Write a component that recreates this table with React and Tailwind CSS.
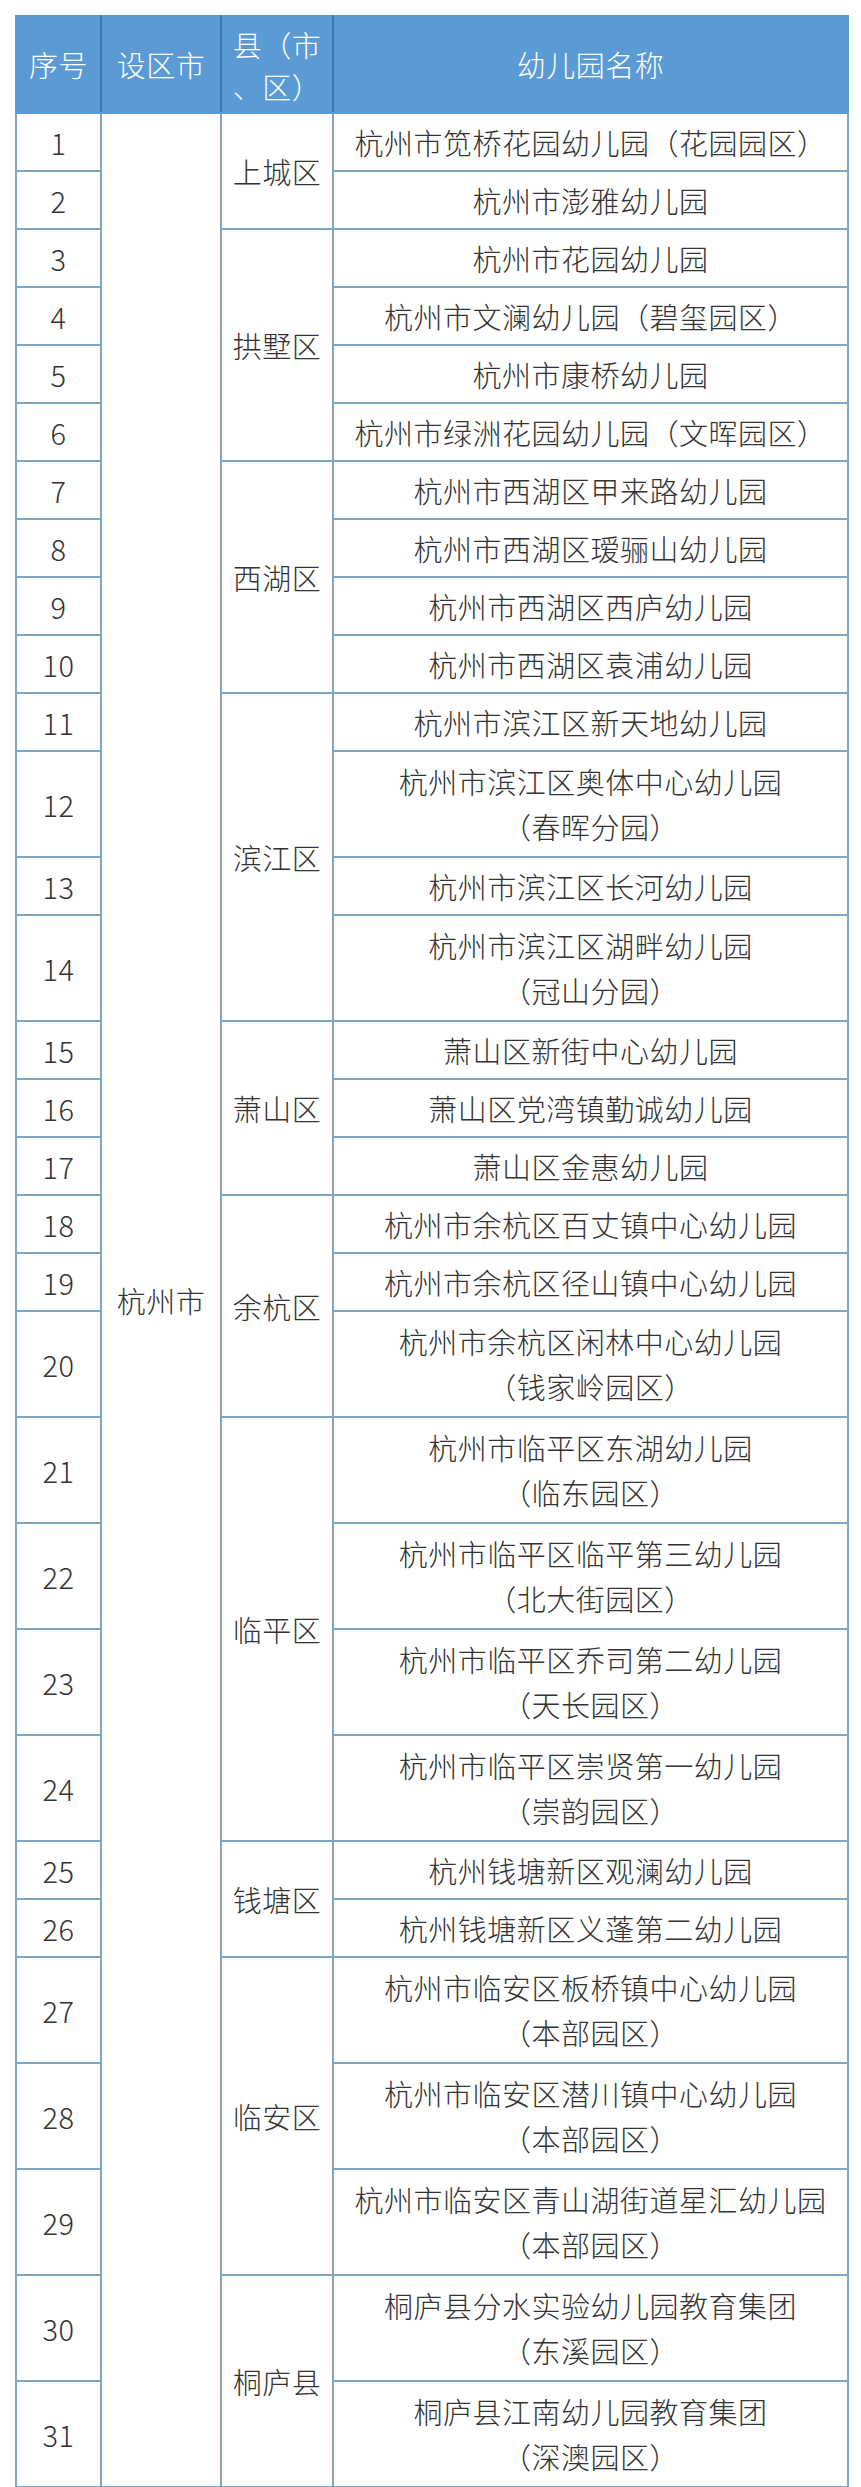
const groups = [
  { district: '上城区', rows: [['杭州市笕桥花园幼儿园（花园园区）'], ['杭州市澎雅幼儿园']] },
  {
    district: '拱墅区',
    rows: [['杭州市花园幼儿园'], ['杭州市文澜幼儿园（碧玺园区）'], ['杭州市康桥幼儿园'], ['杭州市绿洲花园幼儿园（文晖园区）']],
  },
  {
    district: '西湖区',
    rows: [['杭州市西湖区甲来路幼儿园'], ['杭州市西湖区瑷骊山幼儿园'], ['杭州市西湖区西庐幼儿园'], ['杭州市西湖区袁浦幼儿园']],
  },
  {
    district: '滨江区',
    rows: [
      ['杭州市滨江区新天地幼儿园'],
      ['杭州市滨江区奥体中心幼儿园', '（春晖分园）'],
      ['杭州市滨江区长河幼儿园'],
      ['杭州市滨江区湖畔幼儿园', '（冠山分园）'],
    ],
  },
  { district: '萧山区', rows: [['萧山区新街中心幼儿园'], ['萧山区党湾镇勤诚幼儿园'], ['萧山区金惠幼儿园']] },
  {
    district: '余杭区',
    rows: [['杭州市余杭区百丈镇中心幼儿园'], ['杭州市余杭区径山镇中心幼儿园'], ['杭州市余杭区闲林中心幼儿园', '（钱家岭园区）']],
  },
  {
    district: '临平区',
    rows: [
      ['杭州市临平区东湖幼儿园', '（临东园区）'],
      ['杭州市临平区临平第三幼儿园', '（北大街园区）'],
      ['杭州市临平区乔司第二幼儿园', '（天长园区）'],
      ['杭州市临平区崇贤第一幼儿园', '（崇韵园区）'],
    ],
  },
  { district: '钱塘区', rows: [['杭州钱塘新区观澜幼儿园'], ['杭州钱塘新区义蓬第二幼儿园']] },
  {
    district: '临安区',
    rows: [
      ['杭州市临安区板桥镇中心幼儿园', '（本部园区）'],
      ['杭州市临安区潜川镇中心幼儿园', '（本部园区）'],
      ['杭州市临安区青山湖街道星汇幼儿园', '（本部园区）'],
    ],
  },
  {
    district: '桐庐县',
    rows: [
      ['桐庐县分水实验幼儿园教育集团', '（东溪园区）'],
      ['桐庐县江南幼儿园教育集团', '（深澳园区）'],
    ],
  },
];

const totalRows = groups.reduce((n, g) => n + g.rows.length, 0);
const cell = 'border-2 border-[#7fa6c3] p-0 text-center align-middle';

export default function App() {
  let no = 0;
  return (
    <div
      className="w-[861px] min-h-[2487px] bg-white pt-[15px] pl-[15px] text-[#333] text-[29px] tracking-[0.5px] leading-[45px] font-light"
      style={{ fontFamily: '"Noto Sans CJK SC", "Noto Sans", sans-serif' }}
    >
      <table className="w-[834px] border-collapse table-fixed border-2 border-[#7fa6c3]">
        <colgroup>
          <col className="w-[85px]" />
          <col className="w-[120px]" />
          <col className="w-[112px]" />
          <col />
        </colgroup>
        <thead>
          <tr className="h-[97px] bg-[#5b9bd5] text-white">
            <th className="border-2 border-[#5b9bd5] border-r-[#3f7bb5] font-light">序号</th>
            <th className="border-2 border-[#5b9bd5] border-r-[#3f7bb5] font-light">设区市</th>
            <th className="border-2 border-[#5b9bd5] border-r-[#3f7bb5] font-light leading-[42px] px-1">
              县（市<br />、区）
            </th>
            <th className="border-2 border-[#5b9bd5] font-light">幼儿园名称</th>
          </tr>
        </thead>
        <tbody>
          {groups.map((g, gi) =>
            g.rows.map((lines, ri) => {
              no += 1;
              return (
                <tr key={no} className={lines.length > 1 ? 'h-[106px]' : 'h-[58px]'}>
                  <td className={cell}>{no}</td>
                  {gi === 0 && ri === 0 && (
                    <td className={cell} rowSpan={totalRows}>
                      杭州市
                    </td>
                  )}
                  {ri === 0 && (
                    <td className={cell} rowSpan={g.rows.length}>
                      {g.district}
                    </td>
                  )}
                  <td className={cell}>
                    {lines.map((l) => (
                      <div key={l}>{l}</div>
                    ))}
                  </td>
                </tr>
              );
            })
          )}
        </tbody>
      </table>
    </div>
  );
}
